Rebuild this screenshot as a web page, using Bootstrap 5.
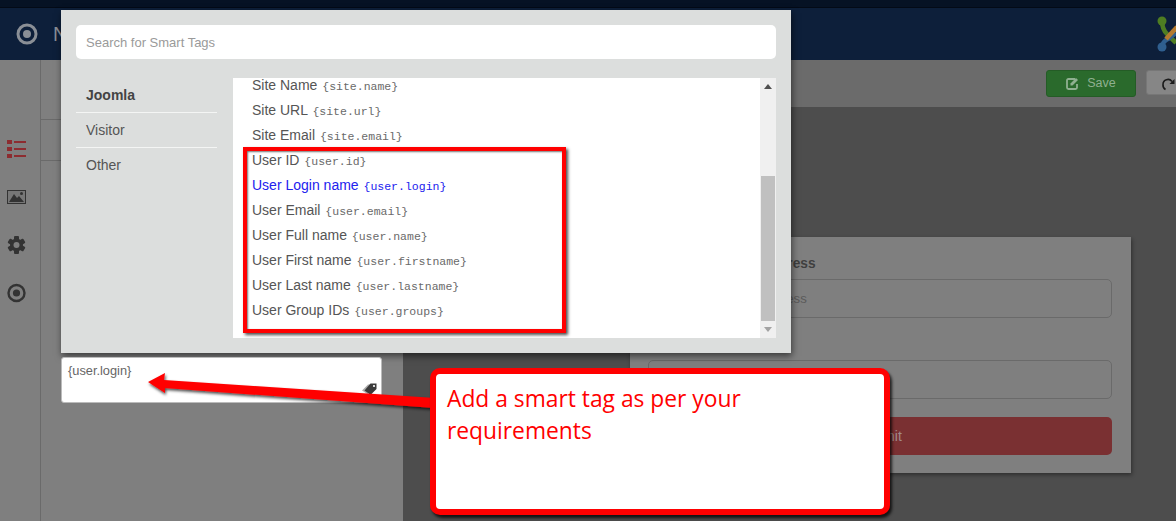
<!DOCTYPE html>
<html lang="en">
<head>
<meta charset="UTF-8">
<title>Smart Tags</title>
<link href="https://cdn.jsdelivr.net/npm/bootstrap@5.3.3/dist/css/bootstrap.min.css" rel="stylesheet">
<style>
body { width: 1176px; height: 521px; overflow: hidden; position: relative; background: #4d4d4d; font-family: "Liberation Sans", Arial, sans-serif; font-size: 14px; }
.top-strip { height: 8px; background: #061224; border-bottom: 1px solid #030a16; }
.head-bar { height: 52px; background: #0d1f3a; color: #8a8f96; padding-left: 16px; font-size: 20px; }
.head-bar .head-title { margin-left: 15px; }
.head-bar .logo-clip { width: 19px; height: 40px; overflow: hidden; }
.page-body { height: 461px; }
.side-rail { width: 41px; background: #7f7f7f; border-right: 1px solid #6a6a6a; padding-top: 79px; gap: 28px; }
.side-rail svg { display: block; margin-left: 7px; }
.left-pane { width: 362px; background: #7f7f7f; padding-top: 19px; }
.left-pane .tab-line { height: 41px; width: 20px; border-bottom: 1px solid #6a6a6a; }
.right-pane { width: 773px; }
.tool-bar { height: 47px; background: #6b6b6b; padding: 10px 0 0 643px; gap: 10px; }
.btn-save { width: 90px; height: 27px; background: #2a6a2c; border: 1px solid #245c26; color: #8fb090; font-size: 12.5px; padding: 0; border-radius: 3px; }
.btn-redo { width: 40px; height: 25px; background: #868686; border: 1px solid #777; padding: 0 0 0 14px; border-radius: 3px; flex-shrink: 0; }
.form-box { width: 501px; height: 236px; background: #7f7f7f; margin: 130px 0 0 227px; padding: 18px 19px 0 18px; box-shadow: 1px 2px 4px rgba(0,0,0,.4); }
.form-box label { font-size: 13.75px; font-weight: 700; color: #3f3f3f; display: block; height: 24px; line-height: 18px; }
.box-input { height: 39px; border: 1px solid #6a6a6a; border-radius: 5px; color: #5a5a5a; font-size: 13.2px; padding: 0 9px; line-height: 37px; }
.box-gap { height: 42px; }
.box-submit { height: 38px; margin-top: 18px; background: #7a3032; border-radius: 5px; color: #a08a8a; font-size: 14px; line-height: 38px; text-align: center; }

.tags-modal { position: absolute; left: 61px; top: 10px; width: 730px; height: 343px; background: #dcdedd; box-shadow: 1px 3px 7px rgba(0,0,0,.55); padding: 15px; }
.tags-search { height: 34px; border: 0; border-radius: 5px; font-size: 13px; padding: 0 10px; color: #999; }
.tags-search::placeholder { color: #9a9a9a; }
.tags-main { margin-top: 19px; height: 260px; }
.tags-nav { width: 141px; margin-right: 16px; }
.tags-nav .nav-item-x { height: 35px; line-height: 34px; padding-left: 10px; color: #555; border-bottom: 1px solid #f4f5f4; }
.tags-nav .nav-item-x:last-child { border-bottom: 0; }
.tags-nav .nav-item-x.is-on { font-weight: 700; color: #444; }
.tags-panel { width: 543px; background: #fff; overflow: hidden; }
.tags-rows { margin-top: -5px; padding-left: 19px; flex: 1 1 auto; }
.tag-row { height: 25px; line-height: 24px; color: #555; font-size: 14px; white-space: nowrap; }
.tag-row code { font-family: "Liberation Mono", monospace; font-size: 11.5px; color: #6a6a6a; margin-left: 1px; }
.tag-row.is-hover, .tag-row.is-hover code { color: #2222ee; }
.fake-scroll { width: 16px; margin-left: auto; background: #f0f0f0; position: relative; flex-shrink: 0; }
.fake-thumb { position: absolute; left: 1px; right: 1px; top: 98px; height: 145px; background: #c0c0c0; }
.fake-up, .fake-down { position: absolute; left: 4px; width: 0; height: 0; border-left: 4px solid transparent; border-right: 4px solid transparent; }
.fake-up { top: 6px; border-bottom: 5px solid #505050; }
.fake-down { bottom: 6px; border-top: 5px solid #a3a3a3; }

.mark-rect { position: absolute; left: 243px; top: 147px; width: 323px; height: 186px; border: 4px solid #f00; box-shadow: 2px 2px 3px rgba(0,0,0,.7), inset 1px 1px 2px rgba(0,0,0,.55); }
.tag-box { position: absolute; left: 61px; top: 357px; width: 321px; height: 46px; background: #fff; border: 1px solid #bbb; border-radius: 3px; padding: 4px 6px; font-size: 12.8px; color: #666; line-height: 18px; }
.tag-box svg { position: absolute; right: 3px; bottom: 6px; }
.arrow-mark { position: absolute; left: 140px; top: 365px; }
.call-box { position: absolute; left: 430px; top: 368px; width: 460px; height: 147px; background: #fff; border: 6px solid #f00; border-radius: 10px; box-shadow: 2px 3px 3px rgba(0,0,0,.75); padding: 9px 11px; color: #f00; font-family: "Open Sans", "Noto Sans", sans-serif; font-size: 22.8px; line-height: 32px; }
</style>
</head>
<body>
<div class="top-strip"></div>
<div class="head-bar d-flex align-items-center">
    <svg width="22" height="22" viewBox="0 0 22 22"><circle cx="11" cy="11" r="9" fill="none" stroke="#8a8f96" stroke-width="3"/><circle cx="11" cy="11" r="4" fill="#8a8f96"/></svg>
    <span class="head-title">N</span>
    <div class="logo-clip ms-auto">
        <svg width="40" height="40" viewBox="0 0 40 40" fill="none">
            <path d="M5 7 Q5 15 10 20 L19 29" stroke="#4e7d22" stroke-width="4.500"/>
            <circle cx="5" cy="7" r="4.500" fill="#4e7d22"/>
            <path d="M5 33 Q6 27 11 25 L19 19" stroke="#2f5f8f" stroke-width="4.500"/>
            <circle cx="5" cy="33" r="4.500" fill="#2f5f8f"/>
            <path d="M9 25 L20 13" stroke="#b37a30" stroke-width="4.500"/>
        </svg>
    </div>
</div>
<div class="page-body d-flex">
    <div class="side-rail d-flex flex-column">
        <svg width="20" height="20" viewBox="0 0 20 20" fill="#8d2c30"><rect x="0" y="1" width="5" height="4"/><rect x="0" y="8" width="5" height="4"/><rect x="0" y="15" width="5" height="4"/><rect x="7" y="2" width="12" height="2"/><rect x="7" y="9" width="12" height="2"/><rect x="7" y="16" width="12" height="2"/></svg>
        <svg width="20" height="20" viewBox="0 0 20 20"><rect x="0" y="3" width="19" height="14" fill="#333"/><rect x="1" y="4" width="17" height="12" fill="#777"/><path d="M2 15 L7 7 L10 11 L12 9 L17 15Z" fill="#333"/><circle cx="14.500" cy="6.500" r="1.500" fill="#333"/></svg>
        <svg width="20" height="20" viewBox="0 0 20 20" fill="#333"><g><rect x="7" y="1" width="5" height="18" rx="1"/><rect x="7" y="1" width="5" height="18" rx="1" transform="rotate(60 9.500 10)"/><rect x="7" y="1" width="5" height="18" rx="1" transform="rotate(120 9.500 10)"/></g><circle cx="9.500" cy="10" r="6.500"/><circle cx="9.500" cy="10" r="3" fill="#7f7f7f"/></svg>
        <svg width="20" height="20" viewBox="0 0 20 20"><circle cx="9.500" cy="10" r="8" fill="none" stroke="#333" stroke-width="2.400"/><circle cx="9.500" cy="10" r="3.600" fill="#333"/></svg>
    </div>
    <div class="left-pane">
        <div class="tab-line"></div>
        <div class="tab-line"></div>
    </div>
    <div class="right-pane">
        <div class="tool-bar d-flex">
            <button class="btn btn-save d-flex align-items-center justify-content-center gap-2 flex-shrink-0">
                <svg width="13" height="13" viewBox="0 0 13 13"><path d="M9 2H2.500Q1 2 1 3.500v7Q1 12 2.500 12h7q1.500 0 1.500-1.500V7" fill="none" stroke="#8fb090" stroke-width="1.800"/><path d="M4.500 6.500L10 1l2 2-5.500 5.500H4.500Z" fill="#8fb090"/></svg>
                Save
            </button>
            <button class="btn btn-redo text-start">
                <svg width="14" height="14" viewBox="0 0 14 14"><path d="M4.500 12.500A5.200 5.200 0 0 1 2 7.500 A5 5 0 0 1 11 4.500" fill="none" stroke="#1c1c1c" stroke-width="1.600"/><path d="M13.500 2v5H8.500Z" fill="#1c1c1c"/></svg>
            </button>
        </div>
        <div class="form-box">
            <label>Enter your Email Address</label>
            <div class="box-input">Enter your Email Address</div>
            <div class="box-gap"></div>
            <div class="box-input"></div>
            <div class="box-submit">Submit</div>
        </div>
    </div>
</div>

<div class="tags-modal">
    <input class="form-control tags-search" type="text" placeholder="Search for Smart Tags">
    <div class="tags-main d-flex">
        <div class="tags-nav">
            <div class="nav-item-x is-on">Joomla</div>
            <div class="nav-item-x">Visitor</div>
            <div class="nav-item-x">Other</div>
        </div>
        <div class="tags-panel d-flex">
            <div class="tags-rows">
                <div class="tag-row">Site Name <code>{site.name}</code></div>
                <div class="tag-row">Site URL <code>{site.url}</code></div>
                <div class="tag-row">Site Email <code>{site.email}</code></div>
                <div class="tag-row">User ID <code>{user.id}</code></div>
                <div class="tag-row is-hover">User Login name <code>{user.login}</code></div>
                <div class="tag-row">User Email <code>{user.email}</code></div>
                <div class="tag-row">User Full name <code>{user.name}</code></div>
                <div class="tag-row">User First name <code>{user.firstname}</code></div>
                <div class="tag-row">User Last name <code>{user.lastname}</code></div>
                <div class="tag-row">User Group IDs <code>{user.groups}</code></div>
            </div>
            <div class="fake-scroll"><div class="fake-up"></div><div class="fake-thumb"></div><div class="fake-down"></div></div>
        </div>
    </div>
</div>

<div class="mark-rect"></div>

<div class="tag-box">{user.login}
    <svg width="16" height="14" viewBox="0 0 16 14"><path d="M0 8.500L6 2.500h3L4 9l3 4Z" fill="#aaa"/><path d="M2.500 8.500L8.500 1.500h6V7L8.500 13Z" fill="#3a3a3a"/><circle cx="12" cy="4" r="1.100" fill="#fff"/></svg>
</div>

<svg class="arrow-mark" width="300" height="50" viewBox="0 0 300 50">
    <defs><filter id="sh" x="-5%" y="-30%" width="110%" height="170%"><feDropShadow dx="1" dy="2" stdDeviation="1.500" flood-color="#000" flood-opacity=".7"/></filter></defs>
    <path d="M8 17 L25 8 L24 15 L295 33 L294 43 L25 23 L25 28Z" fill="#f00" filter="url(#sh)"/>
</svg>

<div class="call-box">Add a smart tag as per your<br>requirements</div>

<script src="https://cdn.jsdelivr.net/npm/bootstrap@5.3.3/dist/js/bootstrap.bundle.min.js"></script>
</body>
</html>
